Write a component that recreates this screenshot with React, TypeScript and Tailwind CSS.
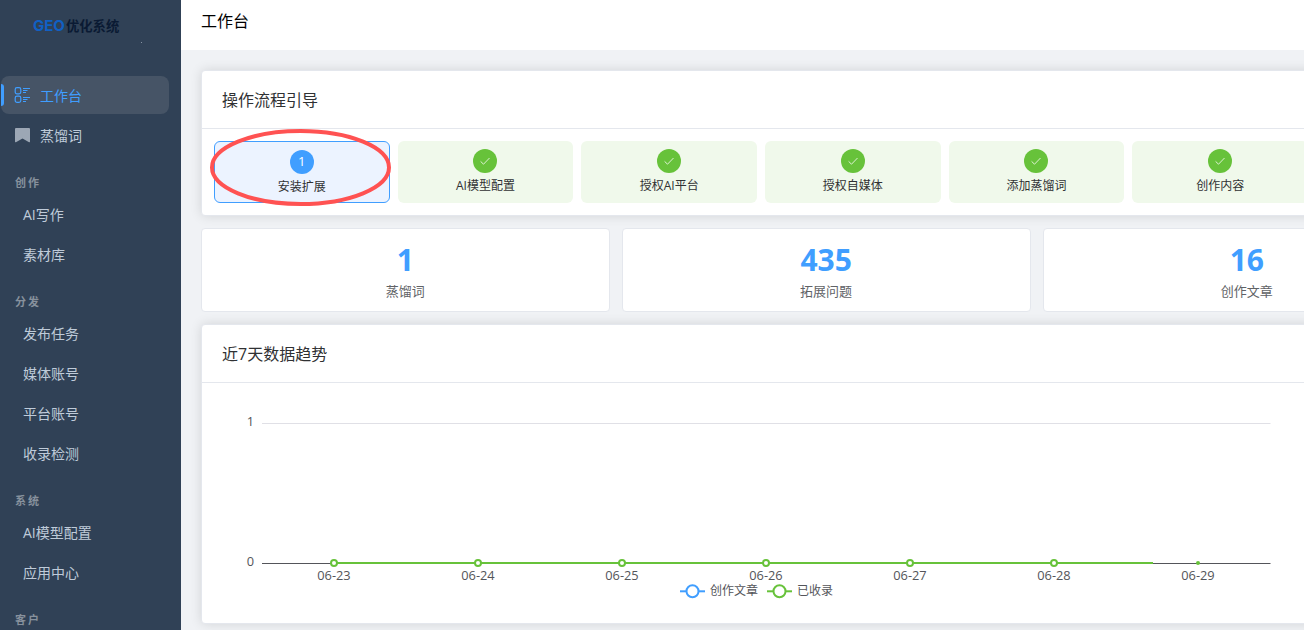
import { Fragment } from 'react';

interface Step {
  label: string;
  done: boolean;
}

const MENU_GROUPS = [
  { title: '创作', items: ['AI写作', '素材库'] },
  { title: '分发', items: ['发布任务', '媒体账号', '平台账号', '收录检测'] },
  { title: '系统', items: ['AI模型配置', '应用中心'] },
  { title: '客户', items: [] },
];

const STEPS: Step[] = [
  { label: '安装扩展', done: false },
  { label: 'AI模型配置', done: true },
  { label: '授权AI平台', done: true },
  { label: '授权自媒体', done: true },
  { label: '添加蒸馏词', done: true },
  { label: '创作内容', done: true },
];

const STATS = [
  { value: 1, label: '蒸馏词' },
  { value: 435, label: '拓展问题' },
  { value: 16, label: '创作文章' },
];

const DAYS = ['06-23', '06-24', '06-25', '06-26', '06-27', '06-28', '06-29'];

export default function App() {
  return (
    <div className="flex h-[630px] w-full overflow-hidden bg-[#f0f2f5] font-['Open_Sans','Noto_Sans_CJK_SC',sans-serif] text-[#303133]">
      <Sidebar />
      <div className="flex min-w-0 flex-1 flex-col">
        <header className="h-[50px] shrink-0 bg-white px-5 pt-[9px] text-base leading-6 text-black">工作台</header>
        <main className="flex-1 overflow-hidden p-5">
          <div className="flex w-[1671px] flex-col gap-3">
            <section className="h-[146px] rounded border border-[#e4e7ed] bg-white shadow-[0_0_12px_rgba(0,0,0,0.12)]">
              <CardTitle text="操作流程引导" />
              <div className="grid grid-cols-9 gap-2 p-3">
                {STEPS.map((step) => (
                  <StepCard key={step.label} step={step} />
                ))}
              </div>
            </section>

            <div className="grid grid-cols-4 gap-3">
              {STATS.map((s) => (
                <div key={s.label} className="h-[84px] rounded border border-[#e4e7ed] bg-white pt-[13px] text-center">
                  <p className="text-[30px] leading-9 font-bold text-[#409eff]">{s.value}</p>
                  <p className="mt-[3px] text-[13px] leading-5 text-[#606266]">{s.label}</p>
                </div>
              ))}
            </div>

            <section className="h-[300px] rounded border border-[#e4e7ed] bg-white shadow-[0_0_12px_rgba(0,0,0,0.12)]">
              <CardTitle text="近7天数据趋势" />
              <div className="p-5">
                <TrendChart />
              </div>
            </section>
          </div>
        </main>
      </div>
    </div>
  );
}

function Sidebar() {
  return (
    <aside className="w-[181px] shrink-0 overflow-hidden bg-[#304156] text-sm text-[#bfcbd9]">
      <div className="relative flex h-[76px] pt-4 pl-[33px] leading-5 font-bold whitespace-nowrap">
        <span className="w-[33px] font-['Inter',sans-serif] text-[15px] text-[#1060c4]">GEO</span>
        <span className="text-[13.3px] text-[#0a1a33]">优化系统</span>
        <i className="absolute top-[42px] left-[141px] size-px bg-[#8793a3]" />
      </div>
      <div className="ml-px flex h-[38px] w-[168px] items-center rounded-lg bg-[#465466] text-[#409eff]">
        <span className="h-[22px] w-[3px] rounded-r-sm bg-[#409eff]" />
        <svg className="ml-2.5 size-4" viewBox="0 0 16 16" fill="none" stroke="currentColor">
          <rect x="1.2" y="0.7" width="5.6" height="6.2" rx="1.8" strokeWidth="1.2" />
          <rect x="1.2" y="9.1" width="5.6" height="6.2" rx="1.8" strokeWidth="1.2" />
          <path d="M9 1.5h7M9 3.5h4.5M9 5.5h3M9 10.5h7M9 12.5h4.5M9 14.5h3" strokeWidth="1" />
        </svg>
        <span className="ml-2.5 pt-px leading-5">工作台</span>
      </div>
      <div className="mt-0.5 flex h-10 items-center pl-[15px]">
        <svg className="mb-0.5 h-[15px] w-[15px]" viewBox="0 0 15 15" fill="#9ca7b5">
          <path d="M1 0h13q1 0 1 1V13.6q0 1-.9.6L7.5 10.6.9 14.2Q0 14.6 0 13.6V1Q0 0 1 0z" />
        </svg>
        <span className="ml-2.5">蒸馏词</span>
      </div>
      {MENU_GROUPS.map((group) => (
        <Fragment key={group.title}>
          <div className="h-[39px] pt-[17px] pl-[15px] text-[11px] leading-5 font-bold tracking-[2px] text-[#87919d]">{group.title}</div>
          {group.items.map((item) => (
            <div key={item} className="h-10 pl-[23px] leading-10">{item}</div>
          ))}
        </Fragment>
      ))}
    </aside>
  );
}

function CardTitle({ text }: { text: string }) {
  return <h2 className="h-[58px] border-b border-[#e4e7ed] pt-[17px] pl-5 text-base leading-6">{text}</h2>;
}

function StepCard({ step }: { step: Step }) {
  if (step.done) {
    return (
      <div className="flex h-[62px] flex-col items-center rounded-md bg-[#f0f9eb] pt-2">
        <span className="flex size-6 items-center justify-center rounded-full bg-[#67c23a]">
          <svg className="size-3" viewBox="0 0 12 12" fill="none" stroke="#e9f6e2" strokeWidth="0.9">
            <path d="M1.6 6.4l2.9 2.8 6-6.2" />
          </svg>
        </span>
        <span className="mt-[5px] text-xs">{step.label}</span>
      </div>
    );
  }
  return (
    <div className="relative flex h-[62px] flex-col items-center rounded-md border border-[#409eff] bg-[#ecf3ff] pt-2">
      <span className="flex size-6 items-center justify-center rounded-full bg-[#409eff] text-[13px] text-white">1</span>
      <span className="mt-[5px] text-xs">{step.label}</span>
      {/* red marker ring around the current step */}
      <svg className="absolute -top-[14px] -left-[5px] h-[78px] w-[182px]" viewBox="0 0 182 78" fill="none">
        <ellipse cx="90.5" cy="39.5" rx="88.5" ry="36.5" stroke="#ff5252" strokeWidth="4" />
      </svg>
    </div>
  );
}

function TrendChart() {
  return (
    <svg className="block h-[200px] w-[1070px]" viewBox="0 0 1070 200" fontSize="12" fill="#54555a">
      <path d="M40 20.5H1048.5" stroke="#e0e0e6" />
      <path d="M40 160.5H1048.5" stroke="#54555a" />
      <text x="32" y="23" textAnchor="end" fontSize="12.8">1</text>
      <text x="32" y="163" textAnchor="end" fontSize="12.8">0</text>

      <path d="M112 160H931" stroke="#67c23a" strokeWidth="2" />
      {DAYS.map((day, i) => (
        <Fragment key={day}>
          {i < DAYS.length - 1 ? (
            <circle cx={112 + i * 144} cy="160" r="3" fill="#fff" stroke="#67c23a" strokeWidth="2" />
          ) : (
            <circle cx={112 + i * 144} cy="160" r="2" fill="#67c23a" />
          )}
          <text x={112 + i * 144} y="177" textAnchor="middle" fontSize="12.8">{day}</text>
        </Fragment>
      ))}

      <path d="M458 188.3h25" stroke="#409eff" strokeWidth="2" />
      <circle cx="470.5" cy="188.3" r="6" fill="#fff" stroke="#409eff" strokeWidth="2" />
      <text x="488" y="192">创作文章</text>
      <path d="M545 188.3h25" stroke="#67c23a" strokeWidth="2" />
      <circle cx="557.5" cy="188.3" r="6" fill="#fff" stroke="#67c23a" strokeWidth="2" />
      <text x="575" y="192">已收录</text>
    </svg>
  );
}
